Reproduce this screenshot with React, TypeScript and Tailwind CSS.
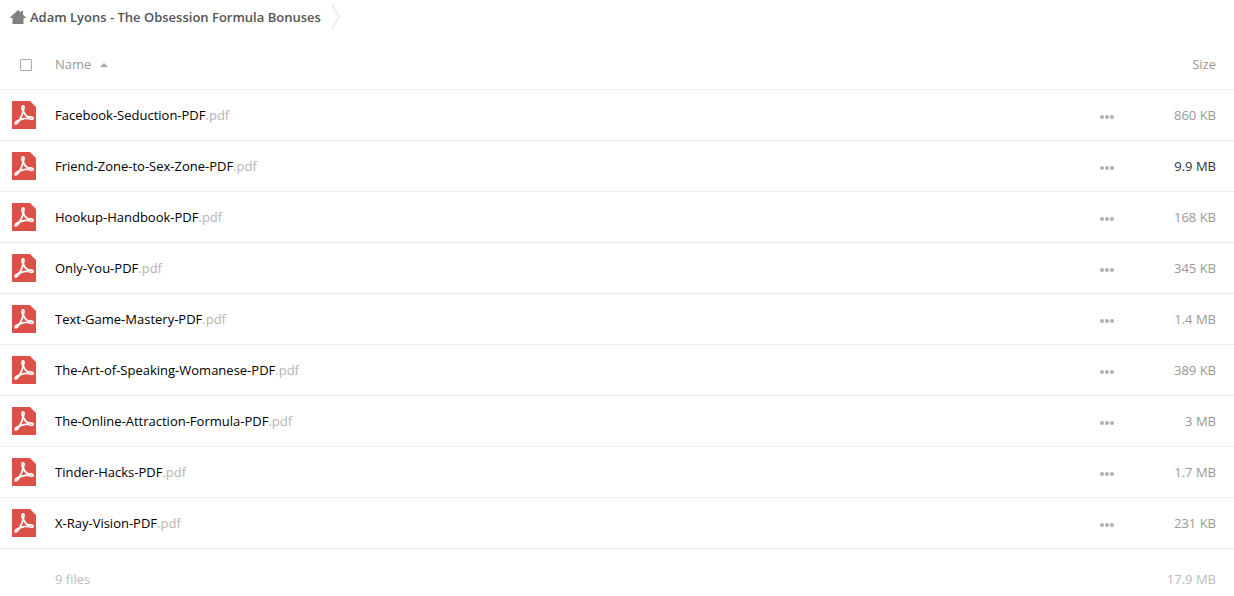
import React from "react";

const files = [
  { name: "Facebook-Seduction-PDF", size: "860 KB" },
  { name: "Friend-Zone-to-Sex-Zone-PDF", size: "9.9 MB", strong: true },
  { name: "Hookup-Handbook-PDF", size: "168 KB" },
  { name: "Only-You-PDF", size: "345 KB" },
  { name: "Text-Game-Mastery-PDF", size: "1.4 MB" },
  { name: "The-Art-of-Speaking-Womanese-PDF", size: "389 KB" },
  { name: "The-Online-Attraction-Formula-PDF", size: "3 MB" },
  { name: "Tinder-Hacks-PDF", size: "1.7 MB" },
  { name: "X-Ray-Vision-PDF", size: "231 KB" },
];

function PdfIcon() {
  return (
    <svg width="24" height="28" viewBox="0 0 24 28" className="block" aria-hidden="true">
      <path d="M.5 0H18l6 6v21.500a.5.5 0 0 1-.5.5H.5a.5.5 0 0 1-.5-.5V.5A.5.5 0 0 1 .5 0z" fill="#dd5047" />
      <path
        d="M11.200 4.900c-1.700 0-1.500 2.600-.4 4.900.2 3-1.400 6-3.300 9-2.400 1-4.700 2.500-4.400 3.700.6 1.200 3-.6 4.800-3.600 2.600-1.100 5.400-1.700 8.200-1.800 1.800 1.300 4.900 1.700 5.100.3.100-1.400-2.400-1.700-4.900-1.500-2.300-1.300-4.300-3.500-5-6 .7-2.500 1.200-5-.1-5z"
        fill="none"
        stroke="#fff"
        strokeWidth="1.700"
        strokeLinejoin="round"
      />
    </svg>
  );
}

export default function App() {
  return (
    <main className="bg-white font-['Open_Sans',sans-serif] text-[13px] text-black">
      <nav className="flex h-10 items-start pl-[10px]" aria-label="Breadcrumb">
        <a href="#" className="flex h-9 items-center gap-1 font-semibold text-[#555]">
          <svg width="16" height="14" viewBox="0 0 16 14" className="mb-[2px]" fill="#808080" aria-hidden="true">
            <path d="M8 0l3 2.800V1h2v3.700L16 7.500v.5h-2.500v6h-11V8H0v-.5z" />
          </svg>
          Adam Lyons - The Obsession Formula Bonuses
        </a>
        <svg width="10" height="26" viewBox="0 0 10 26" className="mt-1 ml-[10px]" fill="none" stroke="#ddd" aria-hidden="true">
          <path d="M1 1l7 12-7 12" />
        </svg>
      </nav>
      <table className="w-full table-fixed border-collapse">
        <thead>
          <tr className="h-[49px] border-b border-[#eee] text-[#999]">
            <th className="w-[55px] pt-[2px] pl-5 text-left">
              <input type="checkbox" aria-label="Select all files" className="block size-3 appearance-none rounded-[1px] border border-[#aaa] bg-white" />
            </th>
            <th className="text-left font-normal">
              <button className="flex items-center gap-[9px]">
                Name
                <svg width="8" height="4" viewBox="0 0 8 4" className="mt-[2px]" fill="#aaa" aria-hidden="true"><path d="M0 4l4-4 4 4z" /></svg>
              </button>
            </th>
            <th className="w-10" aria-label="Actions" />
            <th className="w-[100px] pr-[18px] text-right font-normal">Size</th>
          </tr>
        </thead>
        <tbody>
          {files.map((f) => (
            <tr key={f.name} className="h-[51px] border-b border-[#eee]">
              <td className="pl-3"><PdfIcon /></td>
              <td className="pt-[2px]"><a href="#">{f.name}<span className="text-[#b5b5b5]">.pdf</span></a></td>
              <td>
                <button aria-label={`Actions for ${f.name}`} className="block pt-1 pl-[6px]">
                  <svg width="14" height="4" viewBox="0 0 14 4" fill="#b0b0b0" aria-hidden="true">
                    <circle cx="2" cy="2" r="2" /><circle cx="7" cy="2" r="2" /><circle cx="12" cy="2" r="2" />
                  </svg>
                </button>
              </td>
              <td className={f.strong ? "pt-[2px] pr-[18px] text-right text-[#333]" : "pt-[2px] pr-[18px] text-right text-[#999]"}>{f.size}</td>
            </tr>
          ))}
        </tbody>
        <tfoot>
          <tr className="h-[62px] text-[#bbb]">
            <td />
            <td>9 files</td>
            <td />
            <td className="pr-[18px] text-right">17.9 MB</td>
          </tr>
        </tfoot>
      </table>
    </main>
  );
}
